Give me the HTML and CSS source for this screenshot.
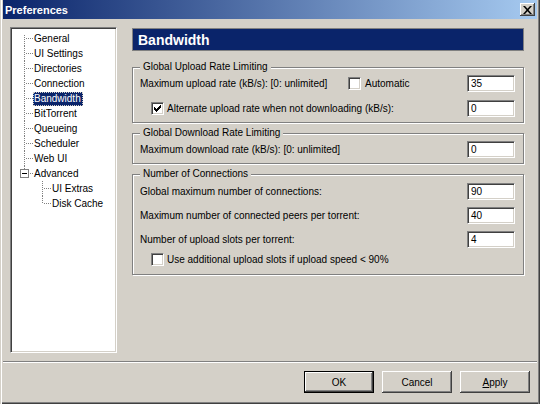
FILE: index.html
```html
<!DOCTYPE html>
<html>
<head>
<meta charset="utf-8">
<link rel="stylesheet" href="styles.css">
</head>
<body>
<div class="window">
  <div class="titlebar">
    <span class="title">Preferences</span>
    <span class="close"><svg width="9" height="8" viewBox="0 0 9 8"><path d="M0 0h2l2.5 2.7L7 0h2L5.5 4 9 8H7L4.5 5.3 2 8H0l3.5-4z" fill="#000"/></svg></span>
  </div>
  <div class="main">
    <div class="tree">
      <div class="node"><span class="conn first"></span><span class="text">General</span></div>
      <div class="node"><span class="conn"></span><span class="text">UI Settings</span></div>
      <div class="node"><span class="conn"></span><span class="text">Directories</span></div>
      <div class="node"><span class="conn"></span><span class="text">Connection</span></div>
      <div class="node"><span class="conn"></span><span class="text selected">Bandwidth</span></div>
      <div class="node"><span class="conn"></span><span class="text">BitTorrent</span></div>
      <div class="node"><span class="conn"></span><span class="text">Queueing</span></div>
      <div class="node"><span class="conn"></span><span class="text">Scheduler</span></div>
      <div class="node"><span class="conn"></span><span class="text">Web UI</span></div>
      <div class="node"><span class="conn exp"><span class="box"></span></span><span class="text">Advanced</span></div>
      <div class="node"><span class="conn child"></span><span class="text">UI Extras</span></div>
      <div class="node"><span class="conn child last"></span><span class="text">Disk Cache</span></div>
    </div>
    <div class="panel">
      <div class="header">Bandwidth</div>
      <fieldset class="group g1">
        <legend>Global Upload Rate Limiting</legend>
        <div class="row">
          <span class="label fixed">Maximum upload rate (kB/s): [0: unlimited]</span>
          <span class="check"></span><span>Automatic</span>
          <span class="spacer"></span>
          <span class="field">35</span>
        </div>
        <div class="row indent">
          <span class="check"><svg width="11" height="11" viewBox="0 0 11 11"><path d="M2 4h1v3H2zM3 5h1v3H3zM4 6h1v3H4zM5 5h1v3H5zM6 4h1v3H6zM7 3h1v3H7zM8 2h1v3H8z" fill="#000"/></svg></span>
          <span class="label">Alternate upload rate when not downloading (kB/s):</span>
          <span class="field">0</span>
        </div>
      </fieldset>
      <fieldset class="group g2">
        <legend>Global Download Rate Limiting</legend>
        <div class="row">
          <span class="label">Maximum download rate (kB/s): [0: unlimited]</span>
          <span class="field">0</span>
        </div>
      </fieldset>
      <fieldset class="group g3">
        <legend>Number of Connections</legend>
        <div class="row">
          <span class="label">Global maximum number of connections:</span>
          <span class="field">90</span>
        </div>
        <div class="row">
          <span class="label">Maximum number of connected peers per torrent:</span>
          <span class="field">40</span>
        </div>
        <div class="row">
          <span class="label">Number of upload slots per torrent:</span>
          <span class="field">4</span>
        </div>
        <div class="row indent short">
          <span class="check"></span>
          <span class="label">Use additional upload slots if upload speed &lt; 90%</span>
        </div>
      </fieldset>
    </div>
  </div>
  <div class="sep"></div>
  <div class="buttons">
    <span class="btn default">OK</span>
    <span class="btn">Cancel</span>
    <span class="btn"><span><u>A</u>pply</span></span>
  </div>
</div>
</body>
</html>
```

FILE: styles.css
```css
* { box-sizing: border-box; }
html, body { margin: 0; padding: 0; }
body {
  width: 540px;
  height: 404px;
  overflow: hidden;
  background: #d4d0c8;
  font-family: "Liberation Sans", Arial, sans-serif;
  font-size: 10px;
  color: #000;
}
.window {
  width: 540px;
  height: 404px;
  background: #d4d0c8;
  padding: 0 3px 3px 3px;
  display: flex;
  flex-direction: column;
  box-shadow: inset 1px 0 #d4d0c8, inset 2px 0 #fff, inset -1px 0 #404040, inset -2px 0 #808080, inset 0 -1px #404040, inset 0 -2px #808080;
}
.titlebar {
  height: 19px;
  flex: none;
  background: linear-gradient(to right, #0a246a, #a6caf0);
  display: flex;
  align-items: center;
  justify-content: space-between;
  padding: 0 2px;
}
.title { color: #fff; font-weight: bold; font-size: 11px; }
.close {
  width: 15px;
  height: 13px;
  background: #d4d0c8;
  box-shadow: inset -1px -1px #404040, inset 1px 1px #fff, inset -2px -2px #808080;
  display: flex;
  align-items: center;
  justify-content: center;
}
.close svg { display: block; }
.main { height: 342px; flex: none; display: flex; }
.tree {
  margin: 8px 0 8px 7px;
  width: 107px;
  height: 326px;
  flex: none;
  background: #fff;
  border: 1px solid;
  border-color: #808080 #fff #fff #808080;
  box-shadow: inset 1px 1px #404040, inset -1px -1px #d4d0c8;
  padding-top: 3px;
}
.node { display: flex; align-items: center; height: 15px; }
.conn {
  flex: none;
  width: 9px;
  height: 15px;
  margin-left: 13px;
  background:
    repeating-linear-gradient(to bottom, #808080 0 1px, transparent 1px 2px) 0 0 / 1px 100% no-repeat,
    repeating-linear-gradient(to right, #808080 0 1px, transparent 1px 2px) 2px 7px / 7px 1px no-repeat;
}
.conn.first {
  background:
    repeating-linear-gradient(to bottom, #808080 0 1px, transparent 1px 2px) 0 4px / 1px 11px no-repeat,
    repeating-linear-gradient(to right, #808080 0 1px, transparent 1px 2px) 2px 7px / 7px 1px no-repeat;
}
.conn.exp {
  margin-left: 9px;
  width: 13px;
  display: flex;
  align-items: center;
  background:
    repeating-linear-gradient(to bottom, #808080 0 1px, transparent 1px 2px) 4px 0 / 1px 3px no-repeat,
    repeating-linear-gradient(to right, #808080 0 1px, transparent 1px 2px) 10px 7px / 3px 1px no-repeat;
}
.box {
  width: 9px;
  height: 9px;
  border: 1px solid #808080;
  background: #fff linear-gradient(#000, #000) 1px 3px / 5px 1px no-repeat;
}
.conn.child { margin-left: 31px; }
.conn.last {
  background:
    repeating-linear-gradient(to bottom, #808080 0 1px, transparent 1px 2px) 0 0 / 1px 8px no-repeat,
    repeating-linear-gradient(to right, #808080 0 1px, transparent 1px 2px) 2px 7px / 7px 1px no-repeat;
}
.text { padding: 0 1px; line-height: 14px; height: 14px; white-space: nowrap; }
.text.selected {
  background: #0a246a;
  color: #fff;
  outline: 1px dotted #d4d0c8;
  outline-offset: -1px;
  padding: 0 2px 0 1px;
}
.panel { margin: 9px 0 0 15px; width: 392px; flex: none; }
.header {
  height: 23px;
  background: #0a246a;
  color: #fff;
  font-weight: bold;
  font-size: 14px;
  padding-left: 5px;
  display: flex;
  align-items: center;
  border: 1px solid #808080;
}
.group {
  margin: 10px 0 0;
  padding: 2px 8px 5px 7px;
  border: 1px solid #808080;
  box-shadow: inset 1px 1px #fff, 1px 1px #fff;
  min-width: 0;
}
.group legend {
  padding: 0 3px;
  line-height: 12px;
  font-size: 10px;
  background: #d4d0c8;
}
.g2, .g3 { margin-top: 4px; }
.g3 { padding-top: 3px; padding-bottom: 7px; }
.row { display: flex; align-items: center; height: 17px; white-space: nowrap; }
.g1 .row + .row { margin-top: 8px; }
.g3 .row + .row { margin-top: 7px; }
.g3 .row.short { height: 15px; margin-top: 4px; }
.row.indent { padding-left: 11px; }
.label { flex: 1; }
.label.fixed { flex: 0 0 208px; }
.spacer { flex: 1; }
.check {
  width: 13px;
  height: 13px;
  flex: none;
  background: #fff;
  border: 1px solid;
  border-color: #808080 #fff #fff #808080;
  box-shadow: inset 1px 1px #404040, inset -1px -1px #d4d0c8;
  margin-right: 4px;
}
.row.indent .check { margin-right: 3px; }
.check svg { display: block; }
.field {
  width: 48px;
  height: 17px;
  flex: none;
  background: #fff;
  border: 1px solid;
  border-color: #808080 #fff #fff #808080;
  box-shadow: inset 1px 1px #404040, inset -1px -1px #d4d0c8;
  padding-left: 3px;
  line-height: 15px;
}
.sep {
  height: 2px;
  flex: none;
  border-top: 1px solid #808080;
  border-bottom: 1px solid #fff;
}
.buttons {
  display: flex;
  justify-content: flex-end;
  gap: 8px;
  padding: 8px 7px 0 0;
}
.btn {
  width: 70px;
  height: 22px;
  background: #d4d0c8;
  box-shadow: inset -1px -1px #404040, inset 1px 1px #fff, inset -2px -2px #808080;
  display: flex;
  align-items: center;
  justify-content: center;
}
.btn.default { border: 1px solid #000; }
```
